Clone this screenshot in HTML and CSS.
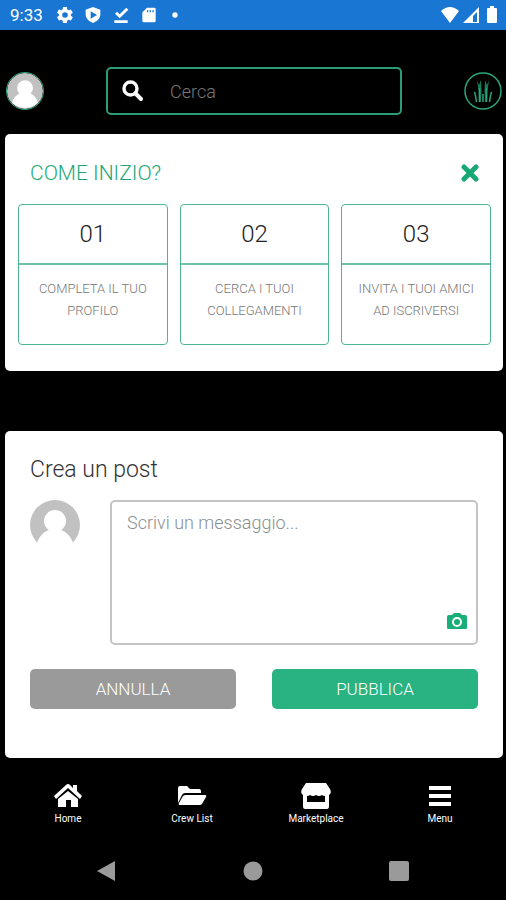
FILE: index.html
```html
<!DOCTYPE html>
<html lang="it">
<head>
<meta charset="utf-8">
<meta name="viewport" content="width=device-width, initial-scale=1">
<title>Home</title>
<link rel="stylesheet" href="styles.css">
</head>
<body>
<div class="status">
  <span class="clock">9:33</span>
  <svg class="status-icon" viewBox="2 2 20 20"><path d="M19.400 13a7.500 7.500 0 0 0 0-2l2.100-1.600a.5.5 0 0 0 .1-.6l-2-3.500a.5.5 0 0 0-.6-.2l-2.500 1a7.300 7.300 0 0 0-1.700-1L14.400 2.400a.5.5 0 0 0-.5-.4h-4a.5.5 0 0 0-.5.4L9 5.100a7.700 7.700 0 0 0-1.700 1l-2.500-1a.5.5 0 0 0-.6.200l-2 3.500a.5.5 0 0 0 .1.600L4.500 11a8 8 0 0 0 0 2l-2.200 1.600a.5.5 0 0 0-.1.600l2 3.500c.1.200.4.300.6.200l2.500-1a7.300 7.300 0 0 0 1.700 1l.4 2.700c0 .2.200.4.500.4h4c.3 0 .5-.2.500-.4l.4-2.700a7.700 7.700 0 0 0 1.700-1l2.500 1c.2.100.5 0 .6-.2l2-3.500a.5.5 0 0 0-.1-.6zM12 15.500a3.500 3.500 0 1 1 0-7 3.500 3.500 0 0 1 0 7z"/></svg>
  <svg class="status-icon" viewBox="0 0 24 24"><path fill-rule="evenodd" d="M12 0 1 4v7c0 6 5 11 11 13 6-2 11-7 11-13V4zM8.500 6.500 18 12l-9.500 5.500z"/></svg>
  <svg class="status-icon" viewBox="0 0 24 24"><path d="M2 20h20v4H2zM20 1l3 3L10 17l-7-7 3-3 4 4z"/></svg>
  <svg class="status-icon" viewBox="0 0 24 24"><path fill-rule="evenodd" d="M9 1h11a2 2 0 0 1 2 2v18a2 2 0 0 1-2 2H4a2 2 0 0 1-2-2V8zm0 4v3h2V5zm4 0v3h2V5zm4 0v3h2V5z"/></svg>
  <svg class="status-icon" viewBox="0 0 24 24"><circle cx="9" cy="12" r="4"/></svg>
  <span class="signals">
    <svg width="20" height="18" viewBox="0 0 20 18"><path d="M1 5Q10-3 19 5L10 17z"/></svg>
    <svg width="18" height="18" viewBox="0 0 18 18"><path fill-rule="evenodd" d="M1 17 17 1v16zm10-1h4V6l-4 4z"/></svg>
    <svg width="12" height="18" viewBox="0 0 12 18"><path d="M4 0h4v2h2q1 0 1 1v13q0 1-1 1H2q-1 0-1-1V3q0-1 1-1h2z"/></svg>
  </span>
</div>

<header class="header">
  <a class="profile" href="#" aria-label="Profilo"><svg viewBox="0 0 50 50"><circle cx="25" cy="25" r="25" fill="#c1c1c1"/><circle cx="25" cy="21" r="11" fill="#fff"/><path fill="#fff" d="M19 28h12c6 2 10 6 12 13a25 25 0 0 1-36 0c2-7 6-11 12-13z"/></svg></a>
  <label class="search">
    <svg viewBox="0 0 22 22" fill="none" stroke="#fff"><circle cx="8.500" cy="8.500" r="6.500" stroke-width="3.400"/><path stroke-width="4" stroke-linecap="round" d="m14 14 5 5"/></svg>
    <input type="search" placeholder="Cerca" aria-label="Cerca">
  </label>
  <a class="brand" href="#" aria-label="Crew"><svg viewBox="0 0 38 38" fill="none" stroke="#2ba57a"><circle cx="19" cy="19" r="18" stroke-width="1.500"/><path fill="#1d7a58" stroke="none" d="M13 8q2 10 2 22h2q1-11 0-22l-2 5zm12 0q-2 10-2 22h-2q-1-11 0-22l2 5z"/><path stroke-width="1.500" d="M15.500 16v14M22.500 16v14M10.500 20q1 3 2 10M27.500 20q-1 3-2 10M19 22v8"/></svg></a>
</header>

<main>
  <section class="card start">
    <div class="start-head">
      <h1>COME INIZIO?</h1>
      <button class="close" aria-label="Chiudi"><svg viewBox="0 0 18 18"><path d="m3 3 12 12M15 3 3 15"/></svg></button>
    </div>
    <ol class="steps">
      <li><strong>01</strong><p>COMPLETA IL TUO PROFILO</p></li>
      <li><strong>02</strong><p>CERCA I TUOI COLLEGAMENTI</p></li>
      <li><strong>03</strong><p>INVITA I TUOI AMICI AD ISCRIVERSI</p></li>
    </ol>
  </section>

  <form class="card post">
    <h2>Crea un post</h2>
    <div class="compose">
      <svg class="author" viewBox="0 0 50 50"><circle cx="25" cy="25" r="25" fill="#c1c1c1"/><circle cx="25" cy="21" r="11" fill="#fff"/><path fill="#fff" d="M19 30h12c6 2 10 7 12 13v7H7v-7c2-6 6-11 12-13z"/></svg>
      <div class="message">
        <textarea placeholder="Scrivi un messaggio..." aria-label="Scrivi un messaggio"></textarea>
        <button class="camera" type="button" aria-label="Aggiungi foto"><svg viewBox="0 0 20 18"><path fill="#18ae78" d="M7 1h6l2 2h3q2 0 2 2v11q0 1-1 1H1q-1 0-1-1V5q0-2 2-2h3z"/><circle cx="10" cy="10" r="4" fill="none" stroke="#fff" stroke-width="2"/></svg></button>
      </div>
    </div>
    <div class="actions">
      <button class="cancel" type="button">ANNULLA</button>
      <button class="publish" type="button">PUBBLICA</button>
    </div>
  </form>
</main>

<nav class="tabs">
  <a href="#"><svg viewBox="0 0 30 26"><path d="m15 8 10 8v8h-7v-7h-5v7H5v-8zM1 13 13 2q2-2 4 0l3 3V2h4v6l5 5-2 3L15 5 3 16z"/></svg>Home</a>
  <a href="#"><svg viewBox="0 0 30 26"><path d="M1 5q0-2 2-2h7l3 3h9q2 0 2 2v2H8q-2 0-3 2l-4 8zM9 12h19q2 0 1 2l-4 7q-1 1-2 1H3q-2 0-1-2l4-7q1-1 3-1z"/></svg>Crew List</a>
  <a href="#"><svg viewBox="0 0 30 26"><path fill-rule="evenodd" d="M5 0h20l4 6q2 4-1 6v11q0 3-2 3H4q-2 0-2-3V12q-3-2-1-6zm1 13v6h18v-6q-2 0-3-1-3 2-6 0-3 2-6 0-1 1-3 1z"/></svg>Marketplace</a>
  <a href="#"><svg viewBox="0 0 30 26"><path d="M4 3h22v4H4zm0 8h22v4H4zm0 8h22v4H4z"/></svg>Menu</a>
</nav>
<div class="system">
  <button aria-label="Indietro"><svg viewBox="0 0 22 22"><path d="M1 11 19 1v20z"/></svg></button>
  <button aria-label="Schermata iniziale"><svg viewBox="0 0 22 22"><circle cx="11" cy="11" r="9.500"/></svg></button>
  <button aria-label="App recenti"><svg viewBox="0 0 22 22"><rect x="1" y="1" width="20" height="20" rx="2"/></svg></button>
</div>
</body>
</html>
```
FILE: styles.css
```css
* { box-sizing: border-box; }
body {
  margin: 0;
  min-height: 100vh;
  background: #000;
  color: #333;
  font-family: Roboto, "Liberation Sans", sans-serif;
  font-weight: 300;
}
svg { display: block; }
h1, h2, p, ol { margin: 0; padding: 0; font-weight: 300; }
button {
  border: 0;
  padding: 0;
  background: none;
  font: inherit;
}
a { color: inherit; text-decoration: none; }
input, textarea { font: inherit; outline: 0; }

.status {
  display: flex;
  align-items: center;
  gap: 12px;
  height: 30px;
  padding: 0 8px 0 10px;
  background: #1976d2;
  color: #fff;
}
.status svg { fill: #fff; }
.clock { font-size: 17px; font-weight: 400; margin-right: 2px; }
.status-icon { width: 16px; height: 16px; }
.signals { display: flex; gap: 2px; margin-left: auto; }
.signals svg:last-child { margin-left: 4px; }

.header {
  display: flex;
  align-items: center;
  justify-content: space-between;
  gap: 62px;
  padding: 37px 4px 19px 6px;
}
.profile, .brand { flex: none; width: 38px; height: 38px; }
.profile {
  overflow: hidden;
  border: 1px solid #2ba57a;
  border-radius: 50%;
}
.search {
  display: flex;
  flex: 1;
  align-items: center;
  gap: 26px;
  min-width: 0;
  height: 48px;
  padding: 0 14px;
  border: 2px solid #2b9c74;
  border-radius: 5px;
}
.search svg { flex: none; width: 22px; height: 22px; }
.search input {
  flex: 1;
  min-width: 0;
  padding: 0;
  border: 0;
  background: none;
  color: #fff;
  font-size: 18px;
}
.search input::placeholder { color: #777; }

main { display: grid; gap: 60px; padding: 0 3px 0 5px; }
.card { border-radius: 5px; background: #fff; }

.start { padding: 26px 12px 26px 13px; }
.start-head {
  display: flex;
  align-items: center;
  justify-content: space-between;
  height: 26px;
  padding: 0 12px;
}
.start-head h1 { color: #18a875; font-size: 21px; }
.close { width: 18px; height: 18px; }
.close path { stroke: #18a875; stroke-width: 5; stroke-linecap: round; }
.steps {
  display: grid;
  grid-template-columns: repeat(3, 1fr);
  gap: 12px;
  margin-top: 18px;
  list-style: none;
}
.steps li {
  min-height: 141px;
  border: 1px solid #4db591;
  border-radius: 4px;
  text-align: center;
}
.steps strong {
  display: block;
  border-bottom: 2px solid #70c2a5;
  color: #222;
  font-size: 24px;
  font-weight: 300;
  line-height: 58px;
}
.steps p {
  padding: 13px 12px 0;
  color: #777;
  font-size: 13px;
  line-height: 22px;
}

.post { padding: 26px 25px 49px; }
.post h2 { font-size: 23px; line-height: 26px; }
.compose {
  display: flex;
  justify-content: space-between;
  gap: 30px;
  margin-top: 17px;
}
.author { flex: none; width: 50px; height: 50px; }
.message { position: relative; flex: 1; }
.message textarea {
  display: block;
  width: 100%;
  height: 145px;
  padding: 9px 15px;
  border: 2px solid #c4c4c4;
  border-radius: 5px;
  background: #fff;
  font-size: 18px;
  line-height: 24px;
  resize: none;
}
.message textarea::placeholder { color: #8a8f8f; }
.camera { position: absolute; right: 11px; bottom: 15px; width: 20px; height: 18px; }
.actions {
  display: grid;
  grid-template-columns: 1fr 1fr;
  gap: 36px;
  margin-top: 24px;
}
.actions button {
  height: 40px;
  border-radius: 5px;
  color: #fff;
  font-size: 17px;
}
.actions .cancel { background: #9a9a9a; }
.actions .publish { background: #29b383; }

.tabs {
  display: grid;
  grid-template-columns: repeat(4, 1fr);
  padding: 25px 4px 16px 6px;
  color: #fff;
  font-size: 10px;
  font-weight: 400;
  line-height: 16px;
}
.tabs a { display: grid; gap: 2px; justify-items: center; }
.tabs svg { width: 30px; height: 26px; fill: #fff; }
.system {
  display: grid;
  grid-template-columns: repeat(3, 1fr);
  justify-items: center;
  padding: 17px 34px;
}
.system svg { width: 22px; height: 22px; fill: #9a9a9a; }
```
